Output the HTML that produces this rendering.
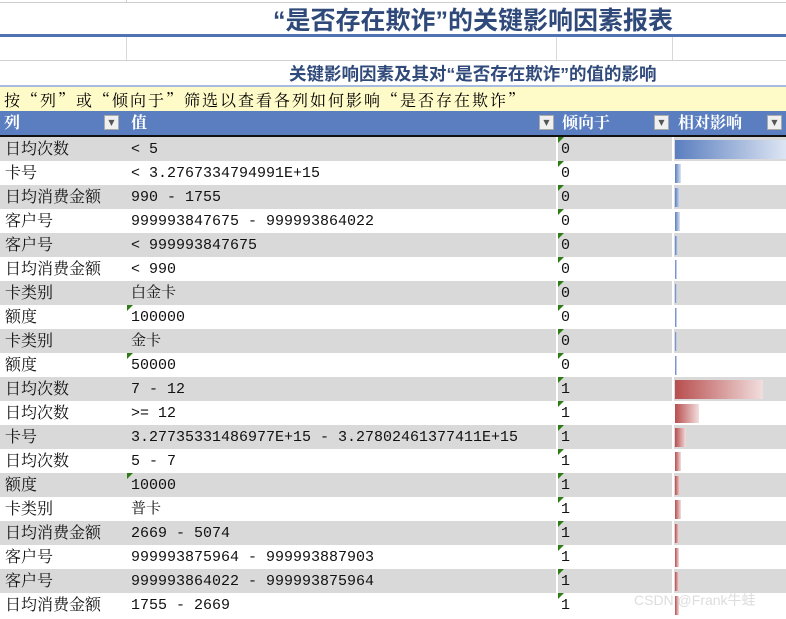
<!DOCTYPE html>
<html><head><meta charset="utf-8"><style>
body{margin:0;width:786px;height:613px;overflow:hidden;background:#fff;font-family:"Liberation Serif","Noto Serif CJK SC","Noto Sans CJK SC",serif;}
.abs{position:absolute}
.title{left:0;top:3px;width:786px;height:32px;font:bold 25px "Liberation Sans","Noto Sans CJK SC",sans-serif;color:#2f4a7a;}
.row{position:absolute;left:0;width:786px;height:24px;font-size:16px;color:#111;}
.c{position:absolute;top:0;height:24px;line-height:26px;white-space:nowrap;}
.m{font-family:"Liberation Mono","Noto Serif CJK SC",monospace;font-size:15px}
.tri{position:absolute;top:0;width:0;height:0;border-top:6px solid #2e7d12;border-right:6px solid transparent;}
.dd{position:absolute;top:4px;width:15px;height:15px;background:#f0f0f0;border:1px solid #aaa;box-sizing:border-box;font-size:8px;line-height:14px;text-align:center;color:#555;font-family:"DejaVu Sans",sans-serif}
</style></head><body>
<div class="abs" style="left:0;top:0;width:786px;height:2px;border-bottom:1px solid #ccc"></div>
<div class="abs" style="left:126px;top:0;width:1px;height:3px;background:#ccc"></div>
<div class="abs title"><span style="position:absolute;left:273px;top:-2px;white-space:nowrap">“是否存在欺诈”的关键影响因素报表</span></div>
<div class="abs" style="left:0;top:34px;width:786px;height:3px;background:#4f73b3"></div>
<div class="abs" style="left:126px;top:37px;width:1px;height:23px;background:#d8d8d8"></div>
<div class="abs" style="left:556px;top:37px;width:1px;height:23px;background:#d8d8d8"></div>
<div class="abs" style="left:672px;top:37px;width:1px;height:23px;background:#d8d8d8"></div>
<div class="abs" style="left:0;top:60px;width:786px;height:1px;background:#d0d0d0"></div>
<div class="abs" style="left:289px;top:61px;font:bold 17.5px 'Liberation Sans','Noto Sans CJK SC',sans-serif;color:#2f4a7a;white-space:nowrap">关键影响因素及其对“是否存在欺诈”的值的影响</div>
<div class="abs" style="left:0;top:85px;width:786px;height:2px;background:#a7bbe0"></div>
<div class="abs" style="left:0;top:87px;width:786px;height:24px;background:#fffbc8;font:16px 'Noto Serif CJK SC',serif;line-height:26px;padding-left:4px;box-sizing:border-box;white-space:pre;letter-spacing:2px">按“列”或“倾向于”筛选以查看各列如何影响“是否存在欺诈”</div>
<div class="abs" style="left:0;top:111px;width:786px;height:24px;background:#5a7ebf;color:#fff;font-size:16px;font-weight:bold;line-height:26px">
<span class="abs" style="left:4px">列</span><span class="abs" style="left:131px">值</span><span class="abs" style="left:562px">倾向于</span><span class="abs" style="left:678px">相对影响</span>
<div class="dd" style="left:104px">▼</div><div class="dd" style="left:539px">▼</div><div class="dd" style="left:654px">▼</div><div class="dd" style="left:767px">▼</div>
</div>
<div class="abs" style="left:0;top:135px;width:786px;height:2px;background:#111"></div>
<div id="rows"></div>
<div class="abs" style="left:634px;top:590px;font:14px 'Liberation Sans','Noto Sans CJK SC',sans-serif;color:#ddd">CSDN @Frank牛蛙</div>
<script>
var d=[["日均次数","< 5","0","b",111],["卡号","< 3.2767334794991E+15","0","b",6],["日均消费金额","990 - 1755","0","b",5],["客户号","999993847675 - 999993864022","0","b",5],["客户号","< 999993847675","0","b",3],["日均消费金额","< 990","0","b",2],["卡类别","白金卡","0","b",2],["额度","100000","0","b",2,1],["卡类别","金卡","0","b",2],["额度","50000","0","b",2,1],["日均次数","7 - 12","1","r",88],["日均次数",">= 12","1","r",24],["卡号","3.27735331486977E+15 - 3.27802461377411E+15","1","r",11],["日均次数","5 - 7","1","r",6],["额度","10000","1","r",5,1],["卡类别","普卡","1","r",6],["日均消费金额","2669 - 5074","1","r",4],["客户号","999993875964 - 999993887903","1","r",4],["客户号","999993864022 - 999993875964","1","r",4],["日均消费金额","1755 - 2669","1","r",4]];
var h="";d.forEach(function(r,i){var t=137+i*24,bg=i%2?"#fff":"#d9d9d9";
var g=r[3]=="b"?"linear-gradient(90deg,#5a7ebf,#dde5f3)":"linear-gradient(90deg,#b84e4e,#f2dede)";
h+='<div class="row" style="top:'+t+'px;background:'+bg+'">'+
'<span class="c" style="left:5px">'+r[0]+'</span><span class="c m" style="left:131px">'+r[1].replace(/</g,"&lt;").replace(/>/g,"&gt;")+'</span><span class="c m" style="left:561px">'+r[2]+'</span>'+
'<div class="abs" style="left:556px;top:0;width:2px;height:24px;background:#fff"></div><div class="abs" style="left:672px;top:0;width:2px;height:24px;background:#fff"></div>'+
'<div class="tri" style="left:558px"></div>'+(r[5]?'<div class="tri" style="left:127px"></div>':'')+
'<div class="abs" style="left:675px;top:3px;width:'+r[4]+'px;height:19px;background:'+g+'"></div></div>';});
document.getElementById("rows").innerHTML=h;
</script>
</body></html>
